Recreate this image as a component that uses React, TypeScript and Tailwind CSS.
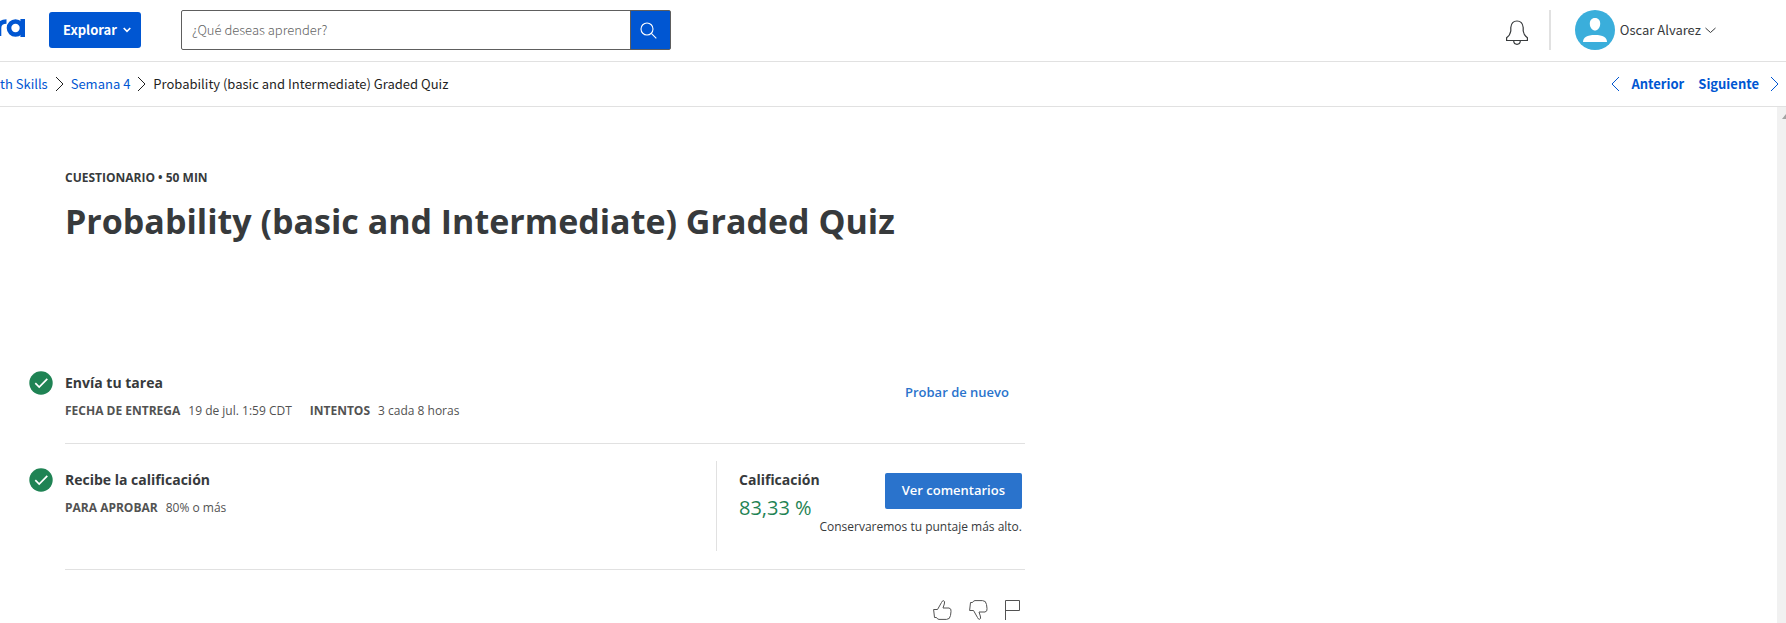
import React from "react";

const sourceFont = "font-['Noto_Sans_CJK_SC','Open_Sans',sans-serif]";

function Logo() {
  return (
    <svg viewBox="0 0 26 22" className="h-[22px] w-[26px] shrink-0" fill="none" stroke="#0056d2" strokeWidth="4.6" role="img" aria-label="Coursera">
      <path d="M-1 19V11Q-1 4.500 6.500 4.500" />
      <circle cx="15.500" cy="11" r="6.500" />
      <path d="M22.700 2V20" />
    </svg>
  );
}

function Chevron({ dir, className }: { dir: "left" | "right"; className?: string }) {
  return (
    <svg viewBox="0 0 9 16" className={"h-4 w-[9px] shrink-0 " + (className ?? "")} fill="none" stroke="currentColor">
      <path d={dir === "right" ? "M1 1L8 8L1 15" : "M8 1L1 8L8 15"} />
    </svg>
  );
}

function Header() {
  return (
    <header className={"flex h-[62px] items-center border-b border-[#e1e1e1] pr-[70px] pb-px text-[#373a3c] " + sourceFont}>
      <a href="#inicio" className="mb-1"><Logo /></a>
      <button className="ml-[23px] flex h-9 items-center gap-1.5 rounded-[3px] bg-[#0056d2] pr-[10px] pl-[14px] text-[13px] leading-5 font-bold text-white">
        Explorar
        <svg viewBox="0 0 8 6" className="h-[6px] w-2" fill="none" stroke="currentColor" strokeWidth="1.600">
          <path d="M.7 1L4 4.300L7.300 1" />
        </svg>
      </button>
      <form className="ml-10 flex h-10 w-[490px] rounded-[2px] border border-[#5e5e5e]" onSubmit={(e) => e.preventDefault()}>
        <input
          type="search"
          aria-label="¿Qué deseas aprender?"
          placeholder="¿Qué deseas aprender?"
          className="min-w-0 flex-1 px-[10px] text-[13px] font-light outline-none placeholder:text-[#636363]"
        />
        <button aria-label="Buscar" className="flex w-10 items-center justify-center border-l border-[#5e5e5e] bg-[#0056d2] pr-1 text-white">
          <svg viewBox="0 0 17 17" className="size-[17px]" fill="none" stroke="currentColor" strokeWidth="1.100">
            <circle cx="7" cy="7" r="6" />
            <path d="M11.300 11.300L16.300 16.300" />
          </svg>
        </button>
      </form>
      <button aria-label="Notificaciones" className="ml-auto">
        <svg viewBox="0 0 22 25" className="mt-1 h-[25px] w-[22px]" fill="none" stroke="#373a3c" strokeWidth="1.200">
          <path d="M.6 20.500V17.700Q4 15.500 4.800 11V7.500Q5.500 1 11 1T17.200 7.500V11Q18 15.500 21.400 17.700V20.500Z" />
          <path d="M7.700 21Q8 24.300 11 24.300T14.300 21" />
        </svg>
      </button>
      <div className="ml-[21px] h-10 w-[2px] bg-[#e1e1e1]" />
      <button className="ml-6 flex items-center text-[13px]">
        <svg viewBox="0 0 40 40" className="size-10">
          <circle cx="20" cy="20" r="20" fill="#3aaedb" />
          <path d="M20 8C23.500 8 25.300 10.500 25.200 14C25 18 22.500 20.500 20 20.500S15 18 14.800 14C14.700 10.500 16.500 8 20 8Z" fill="#fff" />
          <path d="M8 32C8 27.500 12 25 20 25S32 27.500 32 32Z" fill="#fff" />
        </svg>
        <span className="ml-[5px]">Oscar Alvarez</span>
        <svg viewBox="0 0 11 7" className="ml-1 h-[7px] w-[11px]" fill="none" stroke="currentColor">
          <path d="M.5 1L5.500 5.500L10.500 1" />
        </svg>
      </button>
    </header>
  );
}

function Breadcrumbs() {
  return (
    <nav aria-label="Ruta" className={"flex h-[45px] items-center border-b border-[#e1e1e1] pr-[7px] text-[13px] text-[#1f1f1f] " + sourceFont}>
      <a href="#curso" className="text-[#0056d2]">th Skills</a>
      <Chevron dir="right" className="mx-[7px]" />
      <a href="#semana-4" className="text-[#0056d2]">Semana 4</a>
      <Chevron dir="right" className="mx-[7px]" />
      <span>Probability (basic and Intermediate) Graded Quiz</span>
      <div className="ml-auto flex items-center font-bold text-[#0056d2]">
        <a href="#anterior" className="flex items-center gap-[11px]"><Chevron dir="left" />Anterior</a>
        <a href="#siguiente" className="ml-[14px] flex items-center gap-[11px]">Siguiente<Chevron dir="right" /></a>
      </div>
    </nav>
  );
}

function Check() {
  return (
    <svg viewBox="0 0 24 24" className="size-6 shrink-0" aria-label="Completado" role="img">
      <circle cx="12" cy="12" r="11.700" fill="#1f8354" />
      <path d="M6.300 12.200L10.200 16L18.300 7.800" fill="none" stroke="#fff" strokeWidth="1.700" />
    </svg>
  );
}

function Detail({ label, value }: { label: string; value: string }) {
  return (
    <div className="flex gap-2 text-xs leading-[18px] text-[#525252]">
      <dt className="font-bold">{label}</dt>
      <dd>{value}</dd>
    </div>
  );
}

export default function App() {
  return (
    <div className="flex min-h-screen flex-col bg-white font-['Open_Sans',sans-serif] text-[#373a3c]">
      <Header />
      <Breadcrumbs />
      <div className="flex flex-1">
        <main className="min-w-0 flex-1 pt-[61px] pl-[29px]">
          <div className="max-w-[996px]">
            <div className="pl-9">
              <p className="text-xs leading-5 font-bold">CUESTIONARIO • 50 MIN</p>
              <h1 className="mt-[9px] text-[34px] leading-[48px] font-bold">Probability (basic and Intermediate) Graded Quiz</h1>
            </div>
            <section className="mt-[126px] flex gap-3">
              <Check />
              <div className="flex flex-1 justify-between border-b border-[#e1e1e1] pr-4 pb-[23px]">
                <div>
                  <h2 className="text-sm leading-6 font-bold">Envía tu tarea</h2>
                  <dl className="mt-[7px] flex gap-[18px]">
                    <Detail label="FECHA DE ENTREGA" value="19 de jul. 1:59 CDT" />
                    <Detail label="INTENTOS" value="3 cada 8 horas" />
                  </dl>
                </div>
                <button className="mt-[11px] self-start text-[13px] leading-5 font-semibold text-[#2a73cc]">Probar de nuevo</button>
              </div>
            </section>
            <section className="flex gap-3">
              <div className="pt-6"><Check /></div>
              <div className="flex flex-1 justify-between border-b border-[#e1e1e1] pt-[17px] pb-[18px]">
                <div className="pt-[7px]">
                  <h2 className="text-sm leading-6 font-bold">Recibe la calificación</h2>
                  <dl className="mt-[7px]"><Detail label="PARA APROBAR" value="80% o más" /></dl>
                </div>
                <div className="flex h-[90px] w-[309px] border-l border-[#e1e1e1] pr-[3px] pl-[22px]">
                  <div className="w-20 shrink-0 pt-[7px]">
                    <h2 className="text-sm leading-6 font-bold">Calificación</h2>
                    <p className="mt-1 text-xl leading-6 whitespace-nowrap text-[#1f8354]">83,33 %</p>
                  </div>
                  <div className="flex flex-1 flex-col items-end pt-3">
                    <button className="h-9 rounded-[2px] bg-[#2a73cc] px-[17px] text-[13px] font-semibold whitespace-nowrap text-white">Ver comentarios</button>
                    <p className="mt-2 text-xs leading-5 whitespace-nowrap">Conservaremos tu puntaje más alto.</p>
                  </div>
                </div>
              </div>
            </section>
            <div className="mt-[30px] flex justify-end gap-[17px] pr-[5px] text-[#525252]">
              <button aria-label="Me gusta">
                <svg viewBox="0 0 19 20" className="h-5 w-[19px]" fill="none" stroke="currentColor">
                  <path d="M.6 9.500H4.500L8.500 2.500Q9.500.3 10.700.7Q12.200 1.200 11.300 4L10 8H16Q18.500 8.500 18 11.500L17.500 15.500Q17 19.400 13.500 19.400H6Q4.500 19.400 3.500 17.500H1.500Z" />
                </svg>
              </button>
              <button aria-label="No me gusta">
                <svg viewBox="0 0 19 20" className="h-5 w-[19px]" fill="none" stroke="currentColor">
                  <path d="M.6 10.500H4.500L8.500 17.500Q9.500 19.700 10.700 19.300Q12.200 18.800 11.300 16L10 12H16Q18.500 11.500 18 8.500L17.500 4.500Q17 .6 13.500.6H6Q4.500.6 3.500 2.500H1.500Z" />
                </svg>
              </button>
              <button aria-label="Marcar">
                <svg viewBox="0 0 15 20" className="h-5 w-[15px]" fill="none" stroke="currentColor">
                  <path d="M.5 20V.5H14.500V10.500H.5" />
                </svg>
              </button>
            </div>
          </div>
        </main>
        <div className="w-[9px] shrink-0 overflow-hidden bg-[#f1f1f1] pt-[7px] pl-[5px]">
          <svg viewBox="0 0 8 5" className="h-[5px] w-2 max-w-none" fill="#a3a3a3"><path d="M0 5L4 0L8 5Z" /></svg>
        </div>
      </div>
    </div>
  );
}
